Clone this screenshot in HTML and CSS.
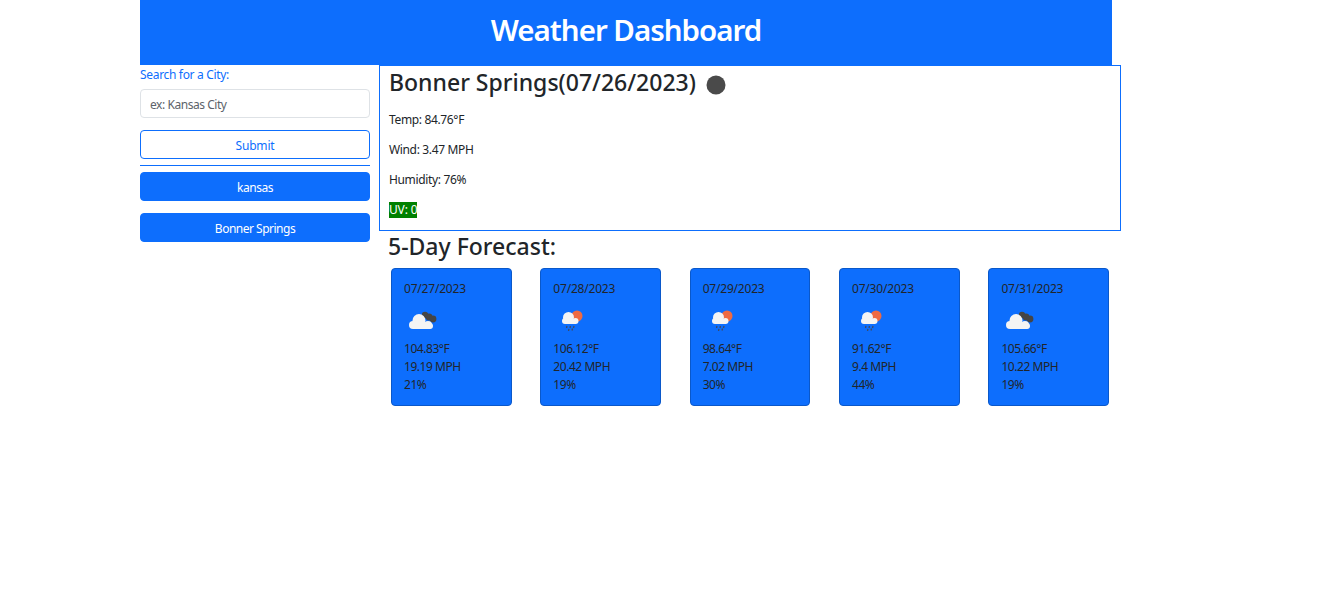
FILE: index.html
```html
<!DOCTYPE html>
<html lang="en">
  <head>
    <meta charset="UTF-8" />
    <meta name="viewport" content="width=device-width, initial-scale=1.0" />
    <title>Weather Dashboard</title>
    <link rel="stylesheet" href="styles.css">
  </head>
  <body>
    <svg class="icon-defs" width="0" height="0">
      <symbol id="cloudDark" viewBox="0 0 30 20">
        <g fill="#454545">
          <circle cx="17" cy="6" r="3.200" />
          <circle cx="21" cy="8" r="3.400" />
          <circle cx="25" cy="10" r="3.400" />
        </g>
        <g fill="#f4f4f4">
          <circle cx="11" cy="11.500" r="6.500" />
          <circle cx="5" cy="16" r="4" />
          <circle cx="20" cy="16" r="4" />
          <circle cx="22" cy="17" r="3" />
          <rect x="5" y="14" width="17" height="6" />
        </g>
      </symbol>
      <symbol id="cloudRain" viewBox="0 0 24 22">
        <circle cx="17" cy="7" r="5.500" fill="#ef6a42" />
        <g fill="#f4f4f4">
          <circle cx="8.500" cy="8.500" r="5.500" />
          <circle cx="5" cy="12" r="3" />
          <circle cx="15.500" cy="12" r="3" />
          <rect x="5" y="11" width="11" height="4" />
        </g>
        <path d="M7 17 L6.500 19 M10.500 17 L10 19 M14 17 L13.500 19 M9 20 L8.500 22 M12.500 19.500 L12 21.500" stroke="#3d4a66" stroke-width="1.300" fill="none" />
      </symbol>
    </svg>

    <div class="page">
      <header class="top-bar">
        <h1>Weather Dashboard</h1>
      </header>

      <div class="layout">
        <aside class="sidebar">
          <form class="search-form">
            <label class="search-label" for="cityInput">Search for a City:</label>
            <input class="search-input" id="cityInput" type="text" placeholder="ex: Kansas City" />
            <button class="btn btn-outline" type="button">Submit</button>
          </form>
          <hr class="divider" />
          <button class="btn btn-solid" type="button">kansas</button>
          <button class="btn btn-solid" type="button">Bonner Springs</button>
        </aside>

        <main class="content">
          <section class="current">
            <h2 class="current-title">
              Bonner Springs(07/26/2023)
              <svg class="current-icon" viewBox="0 0 20 20"><circle cx="10" cy="10" r="9.500" fill="#4a4a4a" /></svg>
            </h2>
            <p>Temp: 84.76°F</p>
            <p>Wind: 3.47 MPH</p>
            <p>Humidity: 76%</p>
            <p><span class="uv">UV: 0</span></p>
          </section>

          <h2 class="forecast-title">5-Day Forecast:</h2>
          <div class="forecast">
            <article class="card">
              <div class="card-date">07/27/2023</div>
              <svg class="card-icon icon-a"><use href="#cloudDark" /></svg>
              <div>104.83°F</div>
              <div>19.19 MPH</div>
              <div>21%</div>
            </article>
            <article class="card">
              <div class="card-date">07/28/2023</div>
              <svg class="card-icon icon-b"><use href="#cloudRain" /></svg>
              <div>106.12°F</div>
              <div>20.42 MPH</div>
              <div>19%</div>
            </article>
            <article class="card">
              <div class="card-date">07/29/2023</div>
              <svg class="card-icon icon-b"><use href="#cloudRain" /></svg>
              <div>98.64°F</div>
              <div>7.02 MPH</div>
              <div>30%</div>
            </article>
            <article class="card">
              <div class="card-date">07/30/2023</div>
              <svg class="card-icon icon-b"><use href="#cloudRain" /></svg>
              <div>91.62°F</div>
              <div>9.4 MPH</div>
              <div>44%</div>
            </article>
            <article class="card">
              <div class="card-date">07/31/2023</div>
              <svg class="card-icon icon-a"><use href="#cloudDark" /></svg>
              <div>105.66°F</div>
              <div>10.22 MPH</div>
              <div>19%</div>
            </article>
          </div>
        </main>
      </div>
    </div>
  </body>
</html>
```

FILE: styles.css
```css
/* page frame */
body {
  margin: 0;
  background-color: #fff;
  color: #212529;
  font-family: "Noto Sans", "Open Sans", sans-serif;
  font-size: 12px;
  line-height: 18px;
  letter-spacing: -0.2px;
}

.icon-defs {
  position: absolute;
}

.page {
  margin-left: 140px;
  width: 981px;
}

.top-bar {
  box-sizing: border-box;
  width: 972px;
  height: 65px;
  padding-bottom: 5px;
  background-color: #0d6efd;
  color: #fff;
  display: flex;
  align-items: center;
  justify-content: center;
}

.top-bar h1 {
  margin: 0;
  font-size: 29.5px;
  line-height: 36px;
  font-weight: 600;
  letter-spacing: -1px;
}

.layout {
  display: flex;
  gap: 9px;
}

/* search column */
.sidebar {
  width: 230px;
  flex-shrink: 0;
}

.search-form {
  display: flex;
  flex-direction: column;
}

.search-label {
  color: #0d6efd;
  margin-bottom: 5px;
  margin-top: 1px;
  letter-spacing: -0.32px;
}

.search-input {
  height: 29px;
  box-sizing: border-box;
  padding: 1px 10px 0 9px;
  border: 1px solid #dee2e6;
  border-radius: 4px;
  font: inherit;
  letter-spacing: -0.45px;
  margin-bottom: 12px;
}

.search-input::placeholder {
  color: #5c636a;
  opacity: 1;
}

.btn {
  display: block;
  width: 100%;
  height: 29px;
  padding: 3px 0 0;
  border-radius: 4px;
  border: 1px solid #0d6efd;
  font: inherit;
  letter-spacing: inherit;
}

.btn-outline {
  background-color: #fff;
  color: #0d6efd;
}

.btn-solid {
  background-color: #0d6efd;
  color: #fff;
  margin-bottom: 12px;
  letter-spacing: -0.5px;
}

.divider {
  margin: 6px 0;
  border: 0;
  border-top: 1px solid #0d6efd;
  opacity: 1;
}

/* current weather */
.content {
  width: 742px;
}

.current {
  box-sizing: border-box;
  height: 166px;
  border: 1px solid #0d6efd;
  padding: 0 9px;
}

.current p {
  margin: 0 0 12px;
  letter-spacing: -0.35px;
}

.current-title {
  display: flex;
  align-items: center;
  gap: 10px;
  margin: 0 0 14px;
  padding-top: 1px;
  font-size: 23px;
  line-height: 30px;
  font-weight: 500;
  letter-spacing: 0;
}

.current-icon {
  width: 20px;
  height: 20px;
  margin-top: 5px;
}

.current p .uv {
  background-color: green;
  color: #fff;
  display: inline-block;
  line-height: 16px;
  letter-spacing: -0.15px;
}

/* forecast */
.forecast-title {
  margin: 0 0 7px 9px;
  font-size: 23px;
  line-height: 30px;
  font-weight: 500;
  letter-spacing: 0;
}

.forecast {
  display: flex;
  justify-content: space-between;
  margin-left: 12px;
  margin-right: 12px;
}

.card {
  box-sizing: border-box;
  width: 120.6px;
  height: 138px;
  padding: 11px 12px;
  background-color: #0d6efd;
  border: 1px solid #0a58ca;
  border-radius: 4px;
  letter-spacing: -0.45px;
}

.card-date {
  margin-bottom: 11px;
  letter-spacing: -0.2px;
}

.card-icon {
  display: block;
  width: 30px;
  height: 20px;
  margin-bottom: 11px;
}

.icon-a {
  margin-left: 4px;
}

.icon-b {
  width: 24px;
  height: 22px;
  margin-left: 7px;
  margin-bottom: 9px;
}
```
